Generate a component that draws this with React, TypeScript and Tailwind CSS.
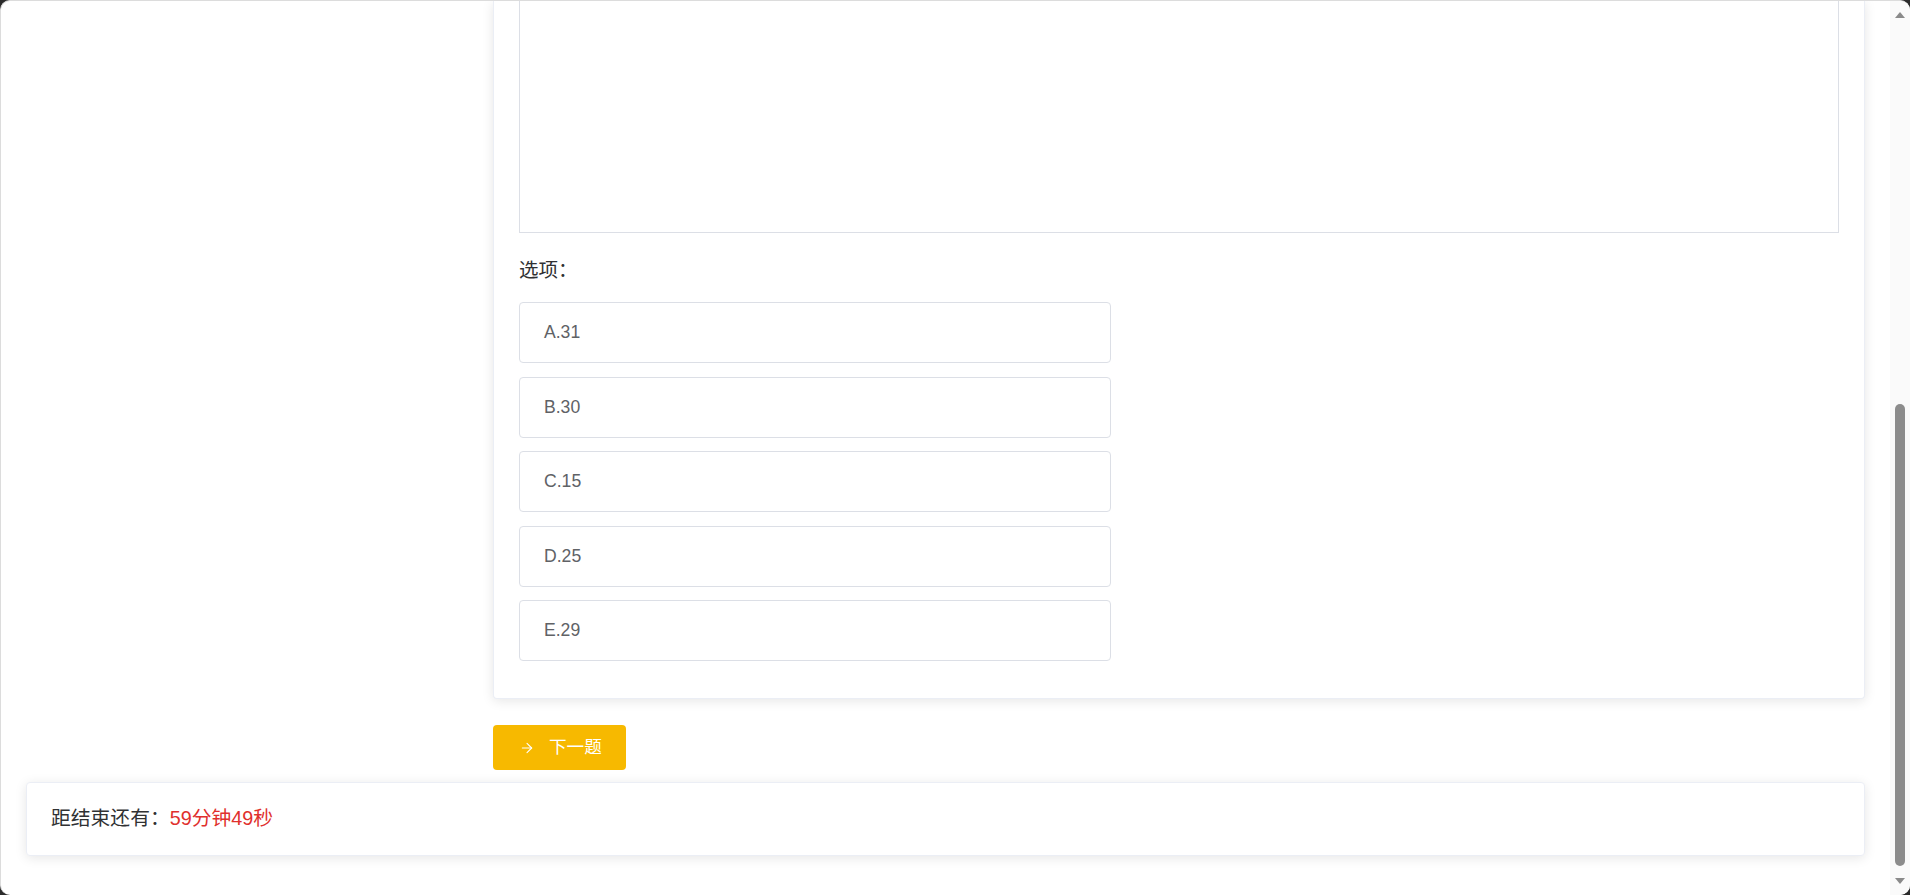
import { ArrowRight } from "lucide-react";

const options = ["A.31", "B.30", "C.15", "D.25", "E.29"];

const font = { fontFamily: '"Liberation Sans", "Noto Sans CJK SC", sans-serif' };

const App: React.FC = () => {
  return (
    <div className="h-[895px] w-[1910px] overflow-hidden bg-[#2b2b2b]" style={font}>
      <div className="flex h-full overflow-hidden rounded-[10px] border-l border-t border-[#dcdcdc] bg-white">
        {/* 主体 */}
        <div className="flex min-w-0 flex-1 flex-col px-[25px]">
          <div className="flex">
            <div className="w-[467px] shrink-0" />
            <div className="flex-1 rounded-b-[4px] border-x border-b border-[#ebeef5] bg-white px-[25px] pb-[37px] shadow-[0_2px_12px_0_rgba(0,0,0,0.1)]">
              <div className="h-[232px] border-x border-b border-[#dcdfe6] bg-white" />
              <p className="mt-[24px] text-[19.5px] leading-[26px] text-[#303133]">选项：</p>
              <div className="mt-[19px] flex flex-col gap-[13.5px]">
                {options.map((o) => (
                  <div
                    key={o}
                    className="flex h-[61px] w-[592px] items-center rounded-[4px] border border-[#dcdfe6] bg-white pl-[24px] text-[17.6px] text-[#606266]"
                  >
                    {o}
                  </div>
                ))}
              </div>
            </div>
          </div>

          <div className="mt-[26px] flex">
            <div className="w-[467px] shrink-0" />
            <button className="flex h-[45px] w-[133px] items-center gap-[14px] rounded-[4px] bg-[#f7b900] pl-[26px] text-[17.6px] text-white">
              <ArrowRight size={16} strokeWidth={1.6} />
              <span>下一题</span>
            </button>
          </div>

          <div className="mt-[12px] flex h-[74px] items-center rounded-[4px] border border-[#ebeef5] bg-white px-[24px] text-[19.8px] shadow-[0_2px_12px_0_rgba(0,0,0,0.1)]">
            <span className="text-[#303133]">距结束还有：</span>
            <span className="text-[#e0302d]">59分钟49秒</span>
          </div>
        </div>

        {/* 滚动条 */}
        <div className="flex w-[20px] shrink-0 flex-col items-center bg-[#fafafa] py-[11px]">
          <svg width="10" height="6" viewBox="0 0 10 6" className="mb-[2px]">
            <polygon points="5,0 10,6 0,6" fill="#8a8a8a" />
          </svg>
          <div className="flex-1" />
          <div className="h-[462px] w-[10px] rounded-full bg-[#8c8c8c]" />
          <div className="h-[12px]" />
          <svg width="10" height="6" viewBox="0 0 10 6">
            <polygon points="0,0 10,0 5,6" fill="#8a8a8a" />
          </svg>
        </div>
      </div>
    </div>
  );
};

export default App;
